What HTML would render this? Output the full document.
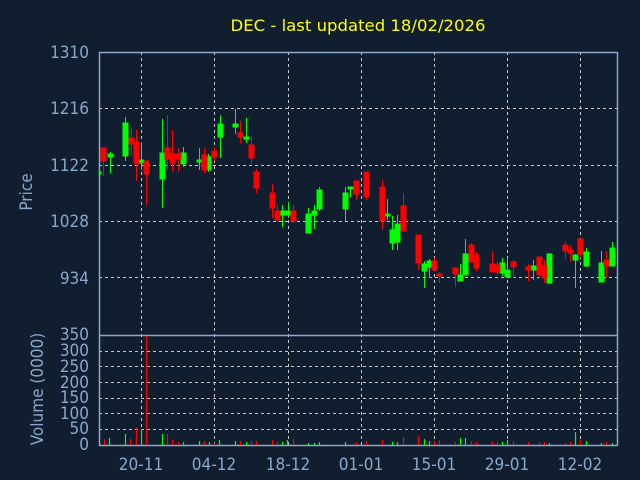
<!DOCTYPE html><html><head><meta charset="utf-8"><style>
html,body{margin:0;padding:0;background:#111e30;width:640px;height:480px;overflow:hidden}
svg{display:block}
text{font-family:"DejaVu Sans Condensed","DejaVu Sans","Liberation Sans",sans-serif}
</style></head><body>
<svg width="640" height="480" xmlns="http://www.w3.org/2000/svg">
<rect width="640" height="480" fill="#111e30"/>
<text x="358" y="31" fill="#ffff00" font-size="16" text-anchor="middle" textLength="255" lengthAdjust="spacingAndGlyphs">DEC - last updated 18/02/2026</text>
<g stroke="#c8c8c8" stroke-width="1" stroke-dasharray="3,3" fill="none">
<line x1="99" y1="108.5" x2="617" y2="108.5"/><line x1="99" y1="165.5" x2="617" y2="165.5"/><line x1="99" y1="221.5" x2="617" y2="221.5"/><line x1="99" y1="277.5" x2="617" y2="277.5"/>
<line x1="99" y1="351.5" x2="617" y2="351.5"/><line x1="99" y1="366.5" x2="617" y2="366.5"/><line x1="99" y1="382.5" x2="617" y2="382.5"/><line x1="99" y1="398.5" x2="617" y2="398.5"/><line x1="99" y1="413.5" x2="617" y2="413.5"/><line x1="99" y1="429.5" x2="617" y2="429.5"/>
<line x1="141.5" y1="52" x2="141.5" y2="445"/><line x1="214.5" y1="52" x2="214.5" y2="445"/><line x1="288.5" y1="52" x2="288.5" y2="445"/><line x1="361.5" y1="52" x2="361.5" y2="445"/><line x1="434.5" y1="52" x2="434.5" y2="445"/><line x1="507.5" y1="52" x2="507.5" y2="445"/><line x1="580.5" y1="52" x2="580.5" y2="445"/>
</g>
<g stroke="#8aa8cc" stroke-width="1.5" fill="none">
<line x1="99" y1="52.5" x2="617" y2="52.5"/>
<line x1="99" y1="335.5" x2="617" y2="335.5"/>
<line x1="99" y1="445.5" x2="617" y2="445.5"/>
<line x1="99.5" y1="52" x2="99.5" y2="446"/>
<line x1="617.5" y1="52" x2="617.5" y2="446"/>
</g>
<g fill="#8aa8cc" font-size="17" text-anchor="end">
<text x="89" y="58">1310</text><text x="89" y="114">1216</text><text x="89" y="171">1122</text><text x="89" y="227">1028</text><text x="89" y="284">934</text>
<text x="89" y="340">350</text><text x="89" y="356">300</text><text x="89" y="372">250</text><text x="89" y="388">200</text><text x="89" y="403">150</text><text x="89" y="419">100</text><text x="89" y="434">50</text><text x="89" y="450">0</text>
</g>
<g fill="#8aa8cc" font-size="17" text-anchor="middle">
<text x="141" y="470">20-11</text><text x="214" y="470">04-12</text><text x="288" y="470">18-12</text><text x="361" y="470">01-01</text><text x="434" y="470">15-01</text><text x="507" y="470">29-01</text><text x="580" y="470">12-02</text>
<text transform="translate(32,192) rotate(-90)">Price</text>
<text transform="translate(43,389) rotate(-90)">Volume (0000)</text>
</g>
<g id="c">
<g stroke="#00ff00" fill="#00ff00">
<rect x="99" y="172" width="2" height="2"/>
<line x1="110.5" y1="152" x2="110.5" y2="173"/><rect x="108" y="154" width="5" height="3"/>
<line x1="125.5" y1="117" x2="125.5" y2="161"/><rect x="123" y="123" width="5" height="33"/>
<line x1="141.5" y1="142" x2="141.5" y2="170"/><rect x="139" y="160" width="5" height="3"/>
<line x1="162.5" y1="119" x2="162.5" y2="208"/><rect x="160" y="153" width="5" height="26"/>
<line x1="183.5" y1="147" x2="183.5" y2="167"/><rect x="181" y="153" width="5" height="11"/>
<line x1="199.5" y1="148" x2="199.5" y2="170"/><rect x="197" y="160" width="5" height="2"/>
<line x1="208.5" y1="154" x2="208.5" y2="172"/><rect x="206" y="157" width="5" height="13"/>
<line x1="220.5" y1="115" x2="220.5" y2="158"/><rect x="218" y="124" width="5" height="13"/>
<line x1="235.5" y1="109" x2="235.5" y2="134"/><rect x="233" y="124" width="5" height="3"/>
<line x1="246.5" y1="118" x2="246.5" y2="143"/><rect x="244" y="137" width="5" height="2"/>
<line x1="282.5" y1="205" x2="282.5" y2="227"/><rect x="280" y="211" width="5" height="4"/>
<line x1="288.5" y1="202" x2="288.5" y2="218"/><rect x="286" y="211" width="5" height="4"/>
<line x1="308.5" y1="208" x2="308.5" y2="233"/><rect x="306" y="214" width="5" height="19"/>
<line x1="314.5" y1="205" x2="314.5" y2="229"/><rect x="312" y="211" width="5" height="4"/>
<line x1="319.5" y1="187" x2="319.5" y2="211"/><rect x="317" y="190" width="5" height="19"/>
<line x1="345.5" y1="187" x2="345.5" y2="221"/><rect x="343" y="193" width="5" height="16"/>
<line x1="350.5" y1="187" x2="350.5" y2="197"/><rect x="348" y="187" width="5" height="2"/>
<line x1="387.5" y1="199" x2="387.5" y2="220"/><rect x="385" y="214" width="5" height="2"/>
<line x1="392.5" y1="216" x2="392.5" y2="250"/><rect x="390" y="230" width="5" height="13"/>
<line x1="397.5" y1="215" x2="397.5" y2="250"/><rect x="395" y="224" width="5" height="18"/>
<line x1="424.5" y1="261" x2="424.5" y2="288"/><rect x="422" y="264" width="5" height="7"/>
<line x1="429.5" y1="259" x2="429.5" y2="278"/><rect x="427" y="261" width="5" height="6"/>
<line x1="460.5" y1="264" x2="460.5" y2="281"/><rect x="458" y="275" width="5" height="6"/>
<line x1="465.5" y1="239" x2="465.5" y2="275"/><rect x="463" y="254" width="5" height="21"/>
<line x1="502.5" y1="258" x2="502.5" y2="276"/><rect x="500" y="263" width="5" height="10"/>
<line x1="507.5" y1="258" x2="507.5" y2="277"/><rect x="505" y="270" width="5" height="7"/>
<line x1="533.5" y1="260" x2="533.5" y2="280"/><rect x="531" y="266" width="5" height="4"/>
<line x1="549.5" y1="253" x2="549.5" y2="284"/><rect x="547" y="254" width="5" height="29"/>
<line x1="575.5" y1="254" x2="575.5" y2="288"/><rect x="573" y="255" width="5" height="5"/>
<line x1="586.5" y1="248" x2="586.5" y2="267"/><rect x="584" y="252" width="5" height="14"/>
<line x1="601.5" y1="251" x2="601.5" y2="282"/><rect x="599" y="263" width="5" height="19"/>
<line x1="612.5" y1="242" x2="612.5" y2="266"/><rect x="610" y="248" width="5" height="18"/>
</g>
<g stroke="#ff0000" fill="#ff0000">
<line x1="103.5" y1="148" x2="103.5" y2="176"/><rect x="101" y="148" width="5" height="13"/>
<line x1="131.5" y1="128" x2="131.5" y2="156"/><rect x="129" y="138" width="5" height="6"/>
<line x1="136.5" y1="130" x2="136.5" y2="181"/><rect x="134" y="142" width="5" height="22"/>
<line x1="146.5" y1="161" x2="146.5" y2="205"/><rect x="144" y="161" width="5" height="13"/>
<line x1="167.5" y1="115" x2="167.5" y2="170"/><rect x="165" y="148" width="5" height="11"/>
<line x1="172.5" y1="130" x2="172.5" y2="172"/><rect x="170" y="154" width="5" height="9"/>
<line x1="178.5" y1="148" x2="178.5" y2="172"/><rect x="176" y="154" width="5" height="5"/>
<line x1="204.5" y1="148" x2="204.5" y2="173"/><rect x="202" y="155" width="5" height="15"/>
<line x1="214.5" y1="148" x2="214.5" y2="161"/><rect x="212" y="151" width="5" height="6"/>
<line x1="240.5" y1="121" x2="240.5" y2="143"/><rect x="238" y="133" width="5" height="4"/>
<line x1="251.5" y1="136" x2="251.5" y2="164"/><rect x="249" y="145" width="5" height="13"/>
<line x1="256.5" y1="169" x2="256.5" y2="193"/><rect x="254" y="172" width="5" height="16"/>
<line x1="272.5" y1="184" x2="272.5" y2="218"/><rect x="270" y="193" width="5" height="15"/>
<line x1="277.5" y1="205" x2="277.5" y2="222"/><rect x="275" y="211" width="5" height="9"/>
<line x1="293.5" y1="205" x2="293.5" y2="223"/><rect x="291" y="211" width="5" height="10"/>
<line x1="356.5" y1="181" x2="356.5" y2="200"/><rect x="354" y="181" width="5" height="13"/>
<line x1="366.5" y1="172" x2="366.5" y2="200"/><rect x="364" y="172" width="5" height="25"/>
<line x1="382.5" y1="180" x2="382.5" y2="230"/><rect x="380" y="187" width="5" height="34"/>
<line x1="403.5" y1="193" x2="403.5" y2="231"/><rect x="401" y="206" width="5" height="25"/>
<line x1="418.5" y1="235" x2="418.5" y2="270"/><rect x="416" y="235" width="5" height="28"/>
<line x1="434.5" y1="258" x2="434.5" y2="270"/><rect x="432" y="261" width="5" height="9"/>
<line x1="439.5" y1="272" x2="439.5" y2="283"/><rect x="437" y="274" width="5" height="2"/>
<line x1="455.5" y1="268" x2="455.5" y2="287"/><rect x="453" y="268" width="5" height="6"/>
<line x1="471.5" y1="243" x2="471.5" y2="262"/><rect x="469" y="245" width="5" height="17"/>
<line x1="476.5" y1="252" x2="476.5" y2="271"/><rect x="474" y="255" width="5" height="13"/>
<line x1="492.5" y1="251" x2="492.5" y2="272"/><rect x="490" y="264" width="5" height="8"/>
<line x1="497.5" y1="261" x2="497.5" y2="275"/><rect x="495" y="265" width="5" height="7"/>
<line x1="513.5" y1="260" x2="513.5" y2="278"/><rect x="511" y="262" width="5" height="5"/>
<line x1="528.5" y1="264" x2="528.5" y2="281"/><rect x="526" y="267" width="5" height="3"/>
<line x1="539.5" y1="257" x2="539.5" y2="279"/><rect x="537" y="257" width="5" height="18"/>
<line x1="544.5" y1="260" x2="544.5" y2="283"/><rect x="542" y="266" width="5" height="12"/>
<line x1="565.5" y1="242" x2="565.5" y2="259"/><rect x="563" y="245" width="5" height="6"/>
<line x1="570.5" y1="245" x2="570.5" y2="262"/><rect x="568" y="250" width="5" height="3"/>
<line x1="580.5" y1="239" x2="580.5" y2="258"/><rect x="578" y="239" width="5" height="15"/>
<line x1="606.5" y1="251" x2="606.5" y2="278"/><rect x="604" y="260" width="5" height="6"/>
</g>
</g>
<g stroke-width="1.2">
<g stroke="#ff0000">
<line x1="104.5" y1="439" x2="104.5" y2="445"/><line x1="130.5" y1="439" x2="130.5" y2="445"/><line x1="136.5" y1="427" x2="136.5" y2="445"/><line x1="146.5" y1="336" x2="146.5" y2="445"/><line x1="167.5" y1="434" x2="167.5" y2="445"/><line x1="172.5" y1="440" x2="172.5" y2="445"/><line x1="178.5" y1="442" x2="178.5" y2="445"/><line x1="204.5" y1="441" x2="204.5" y2="445"/><line x1="214.5" y1="443" x2="214.5" y2="445"/><line x1="240.5" y1="441" x2="240.5" y2="445"/><line x1="251.5" y1="441" x2="251.5" y2="445"/><line x1="256.5" y1="441" x2="256.5" y2="445"/><line x1="272.5" y1="440" x2="272.5" y2="445"/><line x1="277.5" y1="442" x2="277.5" y2="445"/><line x1="293.5" y1="439" x2="293.5" y2="445"/><line x1="356.5" y1="442" x2="356.5" y2="445"/><line x1="366.5" y1="441" x2="366.5" y2="445"/><line x1="382.5" y1="440" x2="382.5" y2="445"/><line x1="403.5" y1="437" x2="403.5" y2="445"/><line x1="418.5" y1="436" x2="418.5" y2="445"/><line x1="434.5" y1="441" x2="434.5" y2="445"/><line x1="439.5" y1="440" x2="439.5" y2="445"/><line x1="455.5" y1="442" x2="455.5" y2="445"/><line x1="471.5" y1="441" x2="471.5" y2="445"/><line x1="476.5" y1="442" x2="476.5" y2="445"/><line x1="492.5" y1="441" x2="492.5" y2="445"/><line x1="497.5" y1="442" x2="497.5" y2="445"/><line x1="513.5" y1="441" x2="513.5" y2="445"/><line x1="528.5" y1="442" x2="528.5" y2="445"/><line x1="539.5" y1="442" x2="539.5" y2="445"/><line x1="544.5" y1="442" x2="544.5" y2="445"/><line x1="565.5" y1="443" x2="565.5" y2="445"/><line x1="570.5" y1="442" x2="570.5" y2="445"/><line x1="580.5" y1="440" x2="580.5" y2="445"/><line x1="606.5" y1="442" x2="606.5" y2="445"/>
</g>
<g stroke="#00ff00">
<line x1="109.5" y1="438" x2="109.5" y2="445"/><line x1="125.5" y1="434" x2="125.5" y2="445"/><line x1="141.5" y1="429" x2="141.5" y2="445"/><line x1="162.5" y1="434" x2="162.5" y2="445"/><line x1="183.5" y1="442" x2="183.5" y2="445"/><line x1="199.5" y1="441" x2="199.5" y2="445"/><line x1="209.5" y1="442" x2="209.5" y2="445"/><line x1="219.5" y1="440" x2="219.5" y2="445"/><line x1="235.5" y1="441" x2="235.5" y2="445"/><line x1="246.5" y1="442" x2="246.5" y2="445"/><line x1="282.5" y1="442" x2="282.5" y2="445"/><line x1="287.5" y1="440" x2="287.5" y2="445"/><line x1="308.5" y1="443" x2="308.5" y2="445"/><line x1="314.5" y1="443" x2="314.5" y2="445"/><line x1="319.5" y1="442" x2="319.5" y2="445"/><line x1="345.5" y1="442" x2="345.5" y2="445"/><line x1="392.5" y1="442" x2="392.5" y2="445"/><line x1="397.5" y1="442" x2="397.5" y2="445"/><line x1="424.5" y1="439" x2="424.5" y2="445"/><line x1="429.5" y1="441" x2="429.5" y2="445"/><line x1="460.5" y1="438" x2="460.5" y2="445"/><line x1="465.5" y1="438" x2="465.5" y2="445"/><line x1="502.5" y1="442" x2="502.5" y2="445"/><line x1="507.5" y1="440" x2="507.5" y2="445"/><line x1="549.5" y1="443" x2="549.5" y2="445"/><line x1="575.5" y1="432" x2="575.5" y2="445"/><line x1="586.5" y1="441" x2="586.5" y2="445"/><line x1="601.5" y1="443" x2="601.5" y2="445"/><line x1="612.5" y1="443" x2="612.5" y2="445"/>
</g>
</g>
</svg>
</body></html>
